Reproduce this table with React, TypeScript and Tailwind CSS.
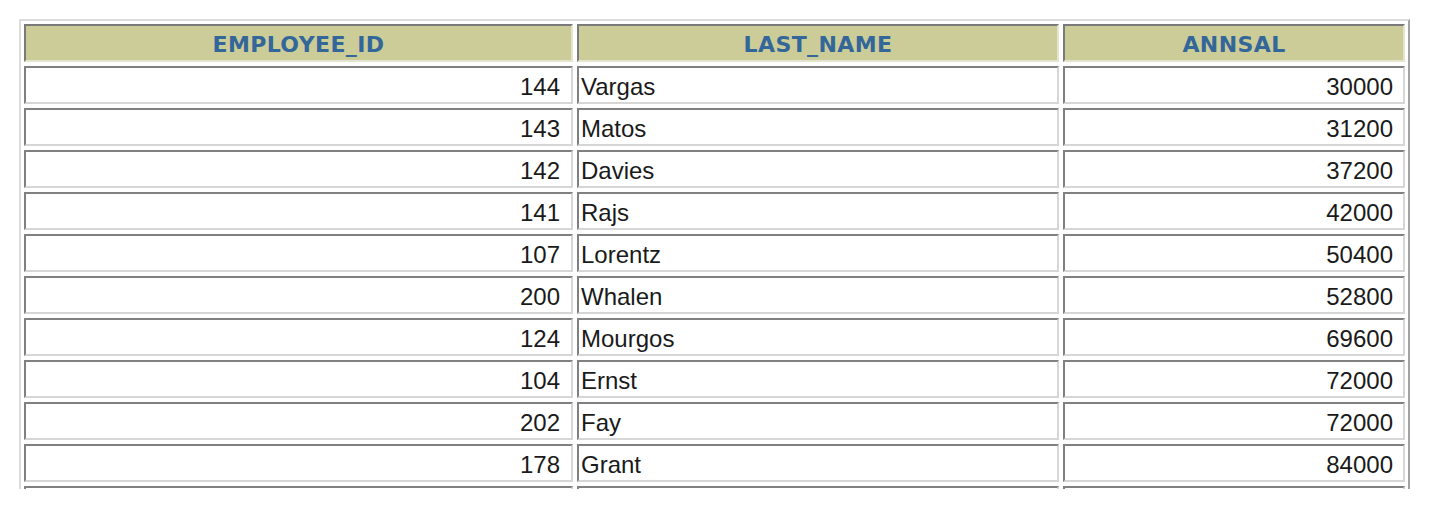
const rows = [
  { id: 144, name: 'Vargas', sal: 30000 },
  { id: 143, name: 'Matos', sal: 31200 },
  { id: 142, name: 'Davies', sal: 37200 },
  { id: 141, name: 'Rajs', sal: 42000 },
  { id: 107, name: 'Lorentz', sal: 50400 },
  { id: 200, name: 'Whalen', sal: 52800 },
  { id: 124, name: 'Mourgos', sal: 69600 },
  { id: 104, name: 'Ernst', sal: 72000 },
  { id: 202, name: 'Fay', sal: 72000 },
  { id: 178, name: 'Grant', sal: 84000 },
]

const cell =
  'h-[38px] border-2 border-t-[#808080] border-l-[#808080] border-b-[#d6d6d6] border-r-[#d6d6d6] bg-white flex items-center pt-[3px] text-[24px] leading-none text-[#1a1a1a]'

const head =
  'h-[38px] border-2 border-t-[#7a7a7a] border-l-[#7a7a7a] border-b-[#e4e4d0] border-r-[#e4e4d0] bg-[#cccc99] flex items-center justify-center pt-[3px] text-[22px] font-bold tracking-[0.4px] text-[#336699]'

export default function App() {
  return (
    <div className="w-[1432px] h-[513px] bg-white pt-[19px] pl-[19px]" style={{ fontFamily: '"Liberation Sans", Arial, sans-serif' }}>
      <div className="h-[470px] w-[1391px] overflow-hidden">
        <div className="border-2 border-t-[#dcdcdc] border-l-[#dcdcdc] border-r-[#a3a3a3] border-b-[#a3a3a3] p-[3px]">
          <div className="grid grid-cols-[549px_482px_342px] gap-[4px]">
            {/* header */}
            <div className={head} style={{ fontFamily: '"DejaVu Sans", Verdana, sans-serif' }}>EMPLOYEE_ID</div>
            <div className={head} style={{ fontFamily: '"DejaVu Sans", Verdana, sans-serif' }}>LAST_NAME</div>
            <div className={head} style={{ fontFamily: '"DejaVu Sans", Verdana, sans-serif' }}>ANNSAL</div>

            {rows.map((r) => (
              <div key={r.id + r.name} className="contents">
                <div className={`${cell} justify-end pr-[11px]`}>{r.id}</div>
                <div className={`${cell} justify-start pl-[2px]`}>{r.name}</div>
                <div className={`${cell} justify-end pr-[10px]`}>{r.sal}</div>
              </div>
            ))}

            {/* next row, cut off by the clip */}
            <div className={cell} />
            <div className={cell} />
            <div className={cell} />
          </div>
        </div>
      </div>
    </div>
  )
}
